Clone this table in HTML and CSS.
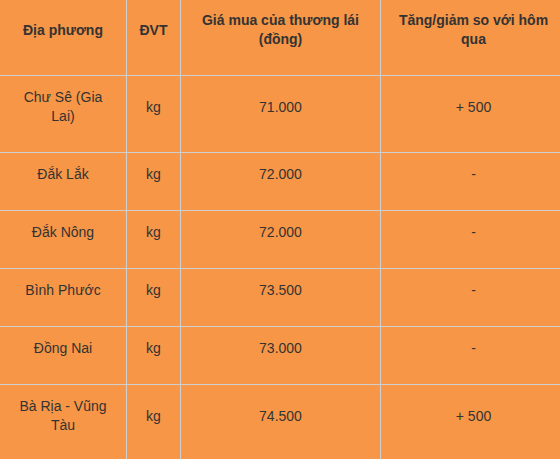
FILE: index.html
```html
<!DOCTYPE html>
<html lang="vi">
<head>
<meta charset="utf-8">
<link rel="stylesheet" href="styles.css">
</head>
<body>
<table class="price-table">
  <colgroup>
    <col class="c1"><col class="c2"><col class="c3"><col class="c4">
  </colgroup>
  <thead>
    <tr>
      <th>Địa phương</th>
      <th>ĐVT</th>
      <th>Giá mua của thương lái (đồng)</th>
      <th>Tăng/giảm so với hôm qua</th>
    </tr>
  </thead>
  <tbody>
    <tr><td>Chư Sê (Gia Lai)</td><td>kg</td><td>71.000</td><td>+ 500</td></tr>
    <tr><td>Đắk Lắk</td><td>kg</td><td>72.000</td><td>-</td></tr>
    <tr><td>Đắk Nông</td><td>kg</td><td>72.000</td><td>-</td></tr>
    <tr><td>Bình Phước</td><td>kg</td><td>73.500</td><td>-</td></tr>
    <tr><td>Đồng Nai</td><td>kg</td><td>73.000</td><td>-</td></tr>
    <tr><td>Bà Rịa - Vũng Tàu</td><td>kg</td><td>74.500</td><td>+ 500</td></tr>
  </tbody>
</table>
</body>
</html>
```
FILE: styles.css
```css
html, body {
  margin: 0;
  padding: 0;
  overflow: hidden;
  background: #f79646;
}
.price-table {
  border-collapse: collapse;
  table-layout: fixed;
  width: 567px;
  margin: -2px 0 0 -1px;
  background: #f79646;
  font-family: "Liberation Sans", Arial, sans-serif;
  font-size: 14px;
  line-height: 19px;
  color: #333;
}
.c1 { width: 127px; }
.c2 { width: 54px; }
.c3 { width: 200px; }
.c4 { width: 186px; }
.price-table th,
.price-table td {
  border: 1px solid #cfcfcf;
  padding: 12px 12px 26px;
  text-align: center;
  vertical-align: middle;
}
.price-table th {
  font-weight: bold;
}
```
